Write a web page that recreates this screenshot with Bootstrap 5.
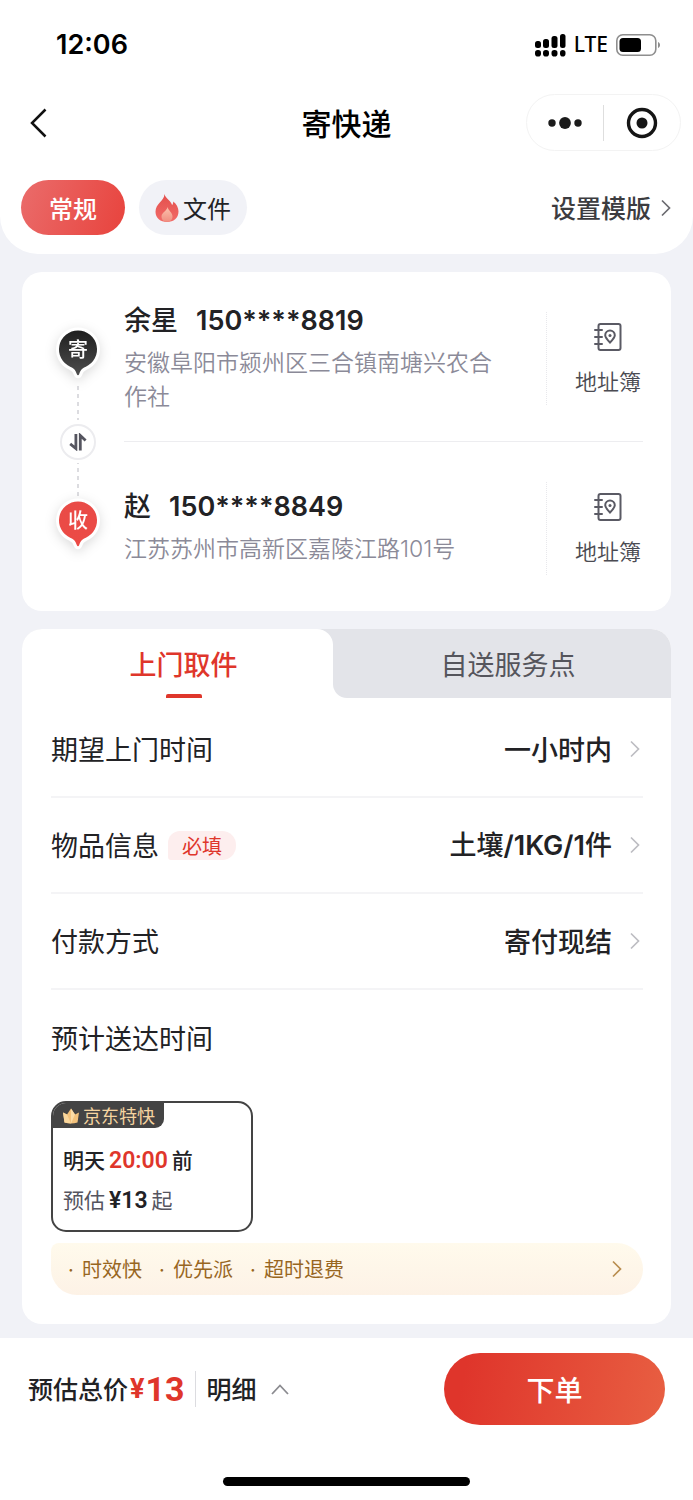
<!DOCTYPE html>
<html lang="zh-CN">
<head>
<meta charset="utf-8">
<meta name="viewport" content="width=device-width, initial-scale=1">
<title>寄快递</title>
<link href="https://cdn.jsdelivr.net/npm/bootstrap@5.3.0/dist/css/bootstrap.min.css" rel="stylesheet">
<style>
  :root { --red: #df362b; --ink: #222225; --muted: #8b8a98; --page: #f1f2f7; --hair: #f4f4f6; }
  body { font-family: "Noto Sans CJK SC", sans-serif; color: var(--ink); background: var(--page); line-height: 1.5; }
  button { color: inherit; background: none; border: 0; padding: 0; font-family: inherit; }
  svg { display: block; flex: none; }
  a { color: inherit; text-decoration: none; }
  .latin { font-family: Inter, sans-serif; }

  .top-panel { background: #fff; border-radius: 0 0 38px 38px; padding-bottom: 19px; }
  .status-bar { height: 88px; padding: 2px 32px 0 56px; color: #000; }
  .clock { font-family: Inter, sans-serif; font-size: 27px; font-weight: 600; }
  .carrier { font-family: "Noto Sans", sans-serif; font-size: 21px; font-weight: 500; }
  .title-bar { display: grid; grid-template-columns: 1fr auto 1fr; align-items: center; margin-top: 6px; padding: 0 12px; }
  .back-btn { padding: 12px 18px; justify-self: start; }
  .page-title { font-size: 30px; font-weight: 500; color: #000; line-height: 38px; padding-bottom: 2px; }
  .capsule { height: 57px; width: 155px; border: 1px solid #f3f3f3; border-radius: 29px; justify-self: end; }
  .capsule button { flex: 1; display: flex; justify-content: center; }
  .capsule-rule { width: 1px; height: 36px; background: #dedede; }
  .kind-bar { margin-top: 29px; padding: 0 21px; }
  .kind { height: 55px; border-radius: 28px; font-size: 24px; background: var(--page); padding: 0 16px; margin-left: 14px; }
  .kind-on { color: #fff; font-weight: 500; background: linear-gradient(110deg, #ea6c6b, #e8433d); padding: 0 28px; margin-left: 0; }
  .template-link { font-size: 25px; font-weight: 500; color: #3c3c40; gap: 9px; }
  .template-link svg { color: #6b6b70; }

  .panel { background: #fff; border-radius: 20px; margin: 18px 22px 0; overflow: hidden; }
  .rail { width: 102px; padding: 56px 25px 0 35px; }
  .pin { position: relative; width: 42px; height: 50px; filter: drop-shadow(0 3px 6px rgba(0,0,0,.14)); }
  .pin span { position: absolute; inset: 0 0 8px; display: flex; align-items: center; justify-content: center; color: #fff; font-size: 20px; font-weight: 500; }
  .rail-line { width: 2px; height: 46px; background: repeating-linear-gradient(#dcdce0 0 4px, transparent 4px 8px); background-clip: content-box; padding: 6px 0 4px; }
  .rail-low { height: 39px; padding: 3px 0 0; }
  .swap-btn { width: 36px; height: 36px; border: 2px solid #ececef; border-radius: 50%; display: flex; align-items: center; justify-content: center; }
  .party { min-height: 169px; }
  .party-text { padding-right: 40px; }
  .party-rule { height: 1px; background: #ededf0; margin-right: 28px; }
  .party-name { font-size: 27px; line-height: 36px; font-weight: 500; }
  .party-name .latin { margin-left: 18px; font-weight: 600; }
  .party-addr { font-size: 23px; line-height: 34px; color: var(--muted); margin-top: 5px; font-weight: 350; }
  .book-btn { width: 125px; height: 93px; margin-top: 4px; padding-right: 2px; border-left: 1px dotted #e8e8ec; font-size: 22px; line-height: 30px; color: #4b4b52; gap: 13px; font-weight: 350; }

  .tab-cell { flex: 338; background: #fff; }
  .tab-cell-on { flex: 311; background: #e3e4e9; }
  .tab-btn { width: 100%; height: 69px; font-size: 27px; color: #55555c; background: #e3e4e9; border-radius: 0 0 0 14px; display: flex; flex-direction: column; align-items: center; line-height: 40px; padding: 15px 0 0 12px; }
  .tab-cell-on .tab-btn { color: var(--red); font-weight: 500; background: #fff; border-radius: 0 16px 0 0; }
  .tab-mark { width: 36px; height: 4px; border-radius: 2px 2px 0 0; background: var(--red); margin-top: 10px; }
  .form-rows { padding: 4px 28px 29px 29px; }
  .line-row { width: 100%; height: 96px; border-bottom: 2px solid var(--hair); font-size: 27px; }
  .line-plain { border-bottom: 0; }
  .line-value { font-weight: 500; gap: 17px; padding-right: 2px; }
  .line-value .latin { font-weight: 600; }
  .line-value svg { color: #bdbdc2; }
  .must { font-size: 20px; line-height: 29px; color: var(--red); background: #fdeeee; border-radius: 12px 14px 14px 3px; padding: 0 14px; margin-left: 9px; }

  .offer { display: flex; flex-direction: column; width: 202px; height: 131px; margin-top: 15px; border: 2px solid #444; border-radius: 15px; overflow: hidden; text-align: left; }
  .offer-tag { background: #444; color: #f5d4a0; font-size: 18px; line-height: 25px; width: 111px; border-radius: 0 0 9px 0; gap: 3px; padding-left: 9px; }
  .offer-line { font-size: 21px; line-height: 38px; padding-left: 10px; color: #55555f; }
  .offer-when { margin-top: 12px; font-weight: 500; color: var(--ink); }
  .digits { font-family: Roboto, sans-serif; font-size: 23px; font-weight: 600; color: var(--ink); }
  .digits-red { color: var(--red); }
  .perks { width: 100%; height: 52px; margin-top: 11px; padding: 0 20px 0 17px; border-radius: 8px 26px 26px 26px; background: linear-gradient(#fffaec, #fdf2e6); color: #98661f; font-size: 20px; text-align: left; }
  .perks svg { color: #b98d4f; }
  .perk-list { gap: 17px; }
  .perk-dot { display: inline-block; width: 14px; font-family: Inter, sans-serif; }

  .pay-bar { background: #fff; margin-top: 14px; padding: 15px 28px 14px; }
  .total { font-size: 25px; font-weight: 500; }
  .yen, .sum { line-height: 40px; font-weight: 700; color: var(--red); font-family: Roboto, sans-serif; }
  .yen { font-size: 27px; margin: 0 1px 0 2px; }
  .sum { font-size: 34px; }
  .pay-rule { width: 1px; height: 36px; background: #dcdce0; margin: 0 11px 0 10px; }
  .detail-btn { font-size: 25px; font-weight: 500; gap: 14px; }
  .order-btn { width: 221px; height: 72px; border-radius: 36px; color: #fff; font-size: 28px; font-weight: 500; background: linear-gradient(100deg, #df352b 10%, #e85f42); }
  .home-mark { width: 247px; height: 9px; border-radius: 5px; background: #000; margin: 52px auto 0; }
</style>
</head>
<body>
<svg width="0" height="0" class="position-absolute" aria-hidden="true">
  <defs>
    <linearGradient id="gBlack" x1="0" y1="0" x2="0" y2="1"><stop offset="0" stop-color="#1f1f1f"/><stop offset="1" stop-color="#4d4d4d"/></linearGradient>
    <linearGradient id="gRed" x1="0" y1="0" x2="0" y2="1"><stop offset="0" stop-color="#e94b47"/><stop offset="1" stop-color="#ec4a45"/></linearGradient>
    <linearGradient id="gFlame" x1="0" y1="0" x2="0" y2="1"><stop offset="0" stop-color="#e34f4c"/><stop offset="1" stop-color="#f26b68"/></linearGradient>
    <linearGradient id="gCore" x1="0" y1="0" x2="0" y2="1"><stop offset="0" stop-color="#fbc3ae"/><stop offset="1" stop-color="#f08e80"/></linearGradient>
    <symbol id="next" viewBox="0 0 12 20"><path d="M2 2.500l7.500 7.500L2 17.500" fill="none" stroke="currentColor" stroke-width="1.700"/></symbol>
    <symbol id="pinShape" viewBox="0 0 42 50" overflow="visible"><path d="M21 2.500a19 19 0 0 0-7.400 36.500c3.800 1.600 5 3.400 6.300 7.300.4 1.200 1.800 1.200 2.200 0 1.300-3.900 2.500-5.700 6.300-7.300A19 19 0 0 0 21 2.500z" fill="#fff" stroke="#fff" stroke-width="6" stroke-linejoin="round"/><path d="M21 2.500a19 19 0 0 0-7.400 36.500c3.800 1.600 5 3.400 6.300 7.300.4 1.200 1.800 1.200 2.200 0 1.300-3.900 2.500-5.700 6.300-7.300A19 19 0 0 0 21 2.500z"/></symbol>
    <symbol id="book" viewBox="0 0 28 30"><g fill="none" stroke="#5a5a64" stroke-width="2"><rect x="4.500" y="2" width="22" height="26" rx="2"/><path d="M1 8h7M1 15h7M1 22h7" stroke-linecap="round"/><path d="M16 20.500c-3-3-4.800-4.800-4.800-7.200a4.800 4.800 0 0 1 9.600 0c0 2.400-1.800 4.200-4.800 7.200z"/></g><circle cx="16" cy="13.500" r="1.500" fill="#5a5a64"/></symbol>
  </defs>
</svg>

<header class="top-panel">
  <div class="status-bar d-flex align-items-center justify-content-between">
    <span class="clock">12:06</span>
    <div class="d-flex align-items-center gap-2">
      <svg width="32" height="24" viewBox="0 0 32 24"><rect x="1" y="8" width="6" height="7" rx="2.500"/><rect x="9" y="6" width="6" height="9" rx="2.500"/><rect x="17.500" y="3" width="6" height="12" rx="2.500"/><rect x="26" y="1" width="5.500" height="14" rx="2.500"/><rect x="1" y="17" width="6" height="6.500" rx="2.800"/><rect x="9" y="17" width="6" height="6.500" rx="2.800"/><rect x="17.500" y="17" width="6" height="6.500" rx="2.800"/><rect x="26" y="17" width="5.500" height="6.500" rx="2.800"/></svg>
      <span class="carrier">LTE</span>
      <svg width="45" height="22" viewBox="0 0 45 22"><rect x=".8" y=".8" width="39" height="20.400" rx="6" fill="none" stroke="#8e8e8e" stroke-width="1.600"/><rect x="3.500" y="4" width="21.500" height="14" rx="3.500"/><path d="M42 8c2.700 1 2.700 5 0 6z" fill="#8e8e8e"/></svg>
    </div>
  </div>
  <div class="title-bar">
    <button type="button" class="back-btn" aria-label="返回"><svg width="17" height="30" viewBox="0 0 17 30"><path d="M15.500 1.500L2 15l13.500 13.500" fill="none" stroke="#111" stroke-width="2.500"/></svg></button>
    <h1 class="page-title m-0">寄快递</h1>
    <div class="capsule d-flex align-items-center">
      <button type="button" aria-label="更多"><svg width="34" height="12" viewBox="0 0 34 12" fill="#1b1b1b"><circle cx="4" cy="6" r="3.700"/><circle cx="17" cy="6" r="5.900"/><circle cx="30" cy="6" r="3.700"/></svg></button>
      <span class="capsule-rule"></span>
      <button type="button" aria-label="关闭"><svg width="32" height="32" viewBox="0 0 32 32"><circle cx="16" cy="16" r="13.500" fill="none" stroke="#151515" stroke-width="3.400"/><circle cx="16" cy="16" r="5.500" fill="#151515"/></svg></button>
    </div>
  </div>
  <div class="kind-bar d-flex align-items-center">
    <button type="button" class="kind kind-on">常规</button>
    <button type="button" class="kind d-flex align-items-center gap-1">
      <svg width="24" height="28" viewBox="0 0 24 28"><path d="M9.500 0c.6 4 6 6 7.600 11 .8-.8 1.200-2 1.100-3.600C21.500 10 23.500 13.500 23.500 17.500 23.500 24 18.500 28 12 28S.5 24 .5 17.700c0-4 2-6.500 4.300-9.200C7 6 9.300 4 9.500 0z" fill="url(#gFlame)"/><path d="M12.500 13c.5 3 5 5.500 5 9.500 0 3.500-2.500 5.300-5.500 5.300s-5.500-1.800-5.500-5.300c0-4 5.500-5.500 6-9.500z" fill="url(#gCore)"/></svg>
      <span>文件</span>
    </button>
    <a href="#" class="template-link d-flex align-items-center ms-auto">设置模版<svg width="12" height="20"><use href="#next"/></svg></a>
  </div>
</header>

<main>
  <section class="panel d-flex">
    <div class="rail d-flex flex-column align-items-center">
      <div class="pin"><svg width="42" height="50" fill="url(#gBlack)" overflow="visible"><use href="#pinShape"/></svg><span>寄</span></div>
      <div class="rail-line"></div>
      <button type="button" class="swap-btn" aria-label="交换"><svg width="18" height="18" viewBox="0 0 18 18" fill="none" stroke="#55555f" stroke-width="2.800"><path d="M6.900 1v14.500L1.200 10.800"/><path d="M11.300 17.500V2.500l5.300 5"/></svg></button>
      <div class="rail-line rail-low"></div>
      <div class="pin"><svg width="42" height="50" fill="url(#gRed)" overflow="visible"><use href="#pinShape"/></svg><span>收</span></div>
    </div>
    <div class="flex-grow-1">
      <div class="party d-flex align-items-center">
        <div class="party-text flex-fill">
          <div class="party-name">余星<span class="latin">150****8819</span></div>
          <div class="party-addr">安徽阜阳市颍州区三合镇南塘兴农合作社</div>
        </div>
        <button type="button" class="book-btn d-flex flex-column align-items-center justify-content-center flex-shrink-0"><svg width="28" height="30"><use href="#book"/></svg>地址簿</button>
      </div>
      <div class="party-rule"></div>
      <div class="party d-flex align-items-center">
        <div class="party-text flex-fill">
          <div class="party-name">赵<span class="latin">150****8849</span></div>
          <div class="party-addr">江苏苏州市高新区嘉陵江路<span class="latin">101</span>号</div>
        </div>
        <button type="button" class="book-btn d-flex flex-column align-items-center justify-content-center flex-shrink-0"><svg width="28" height="30"><use href="#book"/></svg>地址簿</button>
      </div>
    </div>
  </section>

  <section class="panel">
    <div class="d-flex" role="tablist">
      <div class="tab-cell-on"><button type="button" class="tab-btn" role="tab" aria-selected="true">上门取件<span class="tab-mark"></span></button></div>
      <div class="tab-cell"><button type="button" class="tab-btn" role="tab" aria-selected="false">自送服务点</button></div>
    </div>
    <div class="form-rows">
      <button type="button" class="line-row d-flex align-items-center justify-content-between"><span>期望上门时间</span><span class="line-value d-flex align-items-center">一小时内<svg width="12" height="20"><use href="#next"/></svg></span></button>
      <button type="button" class="line-row d-flex align-items-center justify-content-between"><span class="d-flex align-items-center">物品信息<span class="must">必填</span></span><span class="line-value d-flex align-items-center"><span>土壤<span class="latin">/1KG/1</span>件</span><svg width="12" height="20"><use href="#next"/></svg></span></button>
      <button type="button" class="line-row d-flex align-items-center justify-content-between"><span>付款方式</span><span class="line-value d-flex align-items-center">寄付现结<svg width="12" height="20"><use href="#next"/></svg></span></button>
      <div class="line-row line-plain d-flex align-items-center">预计送达时间</div>
      <button type="button" class="offer">
        <span class="offer-tag d-flex align-items-center"><svg width="18" height="16" viewBox="0 0 18 16"><path d="M1 4.500l4 2L9 .5l4 6 4-2-1.500 10c-4 1.300-9 1.300-13 0z" fill="#f3c27c"/><path d="M9 .5l4 6-4 9z" fill="#fbdca6"/><path d="M1 4.500l4 2 4 9-6.500-1z" fill="#fad79c"/></svg>京东特快</span>
        <span class="offer-line offer-when d-flex align-items-baseline gap-1">明天 <span class="digits digits-red">20:00</span> 前</span>
        <span class="offer-line d-flex align-items-baseline gap-1">预估<span class="digits">¥13</span>起</span>
      </button>
      <button type="button" class="perks d-flex align-items-center justify-content-between">
        <span class="perk-list d-flex"><span><span class="perk-dot">·</span>时效快</span><span><span class="perk-dot">·</span>优先派</span><span><span class="perk-dot">·</span>超时退费</span></span>
        <svg width="12" height="20"><use href="#next"/></svg>
      </button>
    </div>
  </section>
</main>

<footer class="pay-bar">
  <div class="d-flex align-items-center">
    <div class="total d-flex align-items-center">预估总价<span class="yen">¥</span><span class="sum">13</span></div>
    <span class="pay-rule"></span>
    <button type="button" class="detail-btn d-flex align-items-center">明细<svg width="18" height="12" viewBox="0 0 18 12"><path d="M1 11l8-8.500L17 11" fill="none" stroke="#8b8b90" stroke-width="1.800"/></svg></button>
    <button type="button" class="order-btn ms-auto">下单</button>
  </div>
  <div class="home-mark"></div>
</footer>
<script src="https://cdn.jsdelivr.net/npm/bootstrap@5.3.0/dist/js/bootstrap.bundle.min.js"></script>
</body>
</html>
